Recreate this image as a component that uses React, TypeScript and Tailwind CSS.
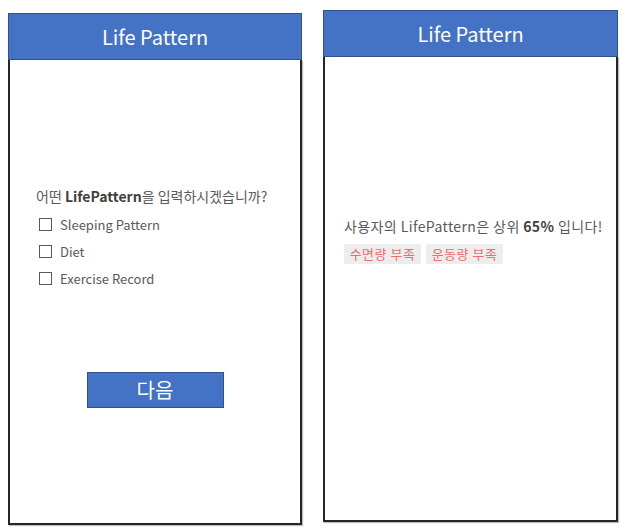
const font = { fontFamily: '"Noto Sans CJK KR", "Noto Sans", sans-serif' };

function Header() {
  return (
    <div className="h-[47px] bg-[#4472c4] border border-[#2f528f] flex items-center justify-center">
      <span className="text-white text-[20px] leading-none">Life Pattern</span>
    </div>
  );
}

function Check({ label }: { label: string }) {
  return (
    <label className="h-[27px] flex items-center gap-[8px] pl-[3px]">
      <span className="w-[13px] h-[13px] border-[1.5px] border-[#595959] bg-white" />
      <span className="text-[13px] text-[#595959]">{label}</span>
    </label>
  );
}

export default function App() {
  const items = ['Sleeping Pattern', 'Diet', 'Exercise Record'];

  return (
    <div className="w-[632px] h-[530px] bg-white flex items-start" style={font}>
      {/* input screen */}
      <div className="ml-[8px] mt-[13px] w-[294px] h-[512px] flex flex-col">
        <Header />
        <div className="flex-1 flex flex-col border-2 border-t-0 border-[#262626] pt-[127px] px-[26px] shadow-[1px_1px_1px_rgba(0,0,0,0.25)]">
          <p className="text-[14px] leading-[19px] text-[#595959] whitespace-nowrap">
            어떤 <b className="font-bold text-[#404040]">LifePattern</b>을 입력하시겠습니까?
          </p>
          <div className="mt-[5px] flex flex-col">
            {items.map((it) => (
              <Check key={it} label={it} />
            ))}
          </div>
          <button className="mt-[80px] self-center w-[137px] h-[36px] bg-[#4472c4] border border-[#2f528f] text-white text-[20px] leading-none">
            다음
          </button>
        </div>
      </div>

      {/* result screen */}
      <div className="ml-[21px] mt-[10px] w-[295px] h-[512px] flex flex-col">
        <Header />
        <div className="flex-1 flex flex-col border-2 border-t-0 border-[#262626] pt-[160px] pl-[19px] shadow-[1px_1px_1px_rgba(0,0,0,0.25)]">
          <p className="text-[14px] leading-[19px] tracking-[0.4px] text-[#595959] whitespace-nowrap">
            사용자의 LifePattern은 상위 <b className="font-bold text-[#404040]">65%</b> 입니다!
          </p>
          <div className="mt-[8px] flex gap-[5px]">
            <span className="h-[20px] w-[77px] bg-[#ededed] rounded-[2px] text-[#f06b6b] text-[13px] tracking-[0.5px] flex items-center justify-center">
              수면량 부족
            </span>
            <span className="h-[20px] w-[77px] bg-[#ededed] rounded-[2px] text-[#f06b6b] text-[13px] tracking-[0.5px] flex items-center justify-center">
              운동량 부족
            </span>
          </div>
        </div>
      </div>
    </div>
  );
}
